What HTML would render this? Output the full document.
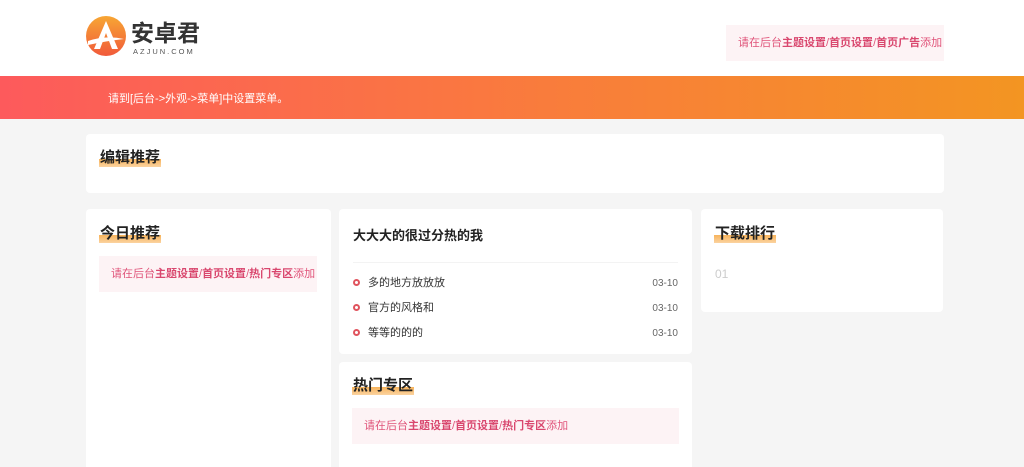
<!DOCTYPE html>
<html><head><meta charset="utf-8"><style>
*{margin:0;padding:0;box-sizing:border-box}
html,body{width:1024px;height:467px;overflow:hidden}
body{background:#f5f5f5;font-family:"Liberation Sans","Noto Sans CJK SC",sans-serif;position:relative}
.abs{position:absolute}
.card{position:absolute;background:#fff;border-radius:4px}
.tt{position:absolute;font-size:15px;font-weight:bold;color:#222;line-height:18px;padding:0 1px;background:linear-gradient(to bottom,transparent 55%,#f7b35a 55%,#fbd3a0 100%)}
.ad{position:absolute;background:#fdf3f5;color:#e0547a;font-size:11px;line-height:37px;white-space:nowrap}
.ad b{font-weight:600;color:#d9476e}
.li{position:absolute;left:14px;width:325px;font-size:11px;color:#333;white-space:nowrap;line-height:14px}
.li i{display:inline-block;width:7px;height:7px;border:2px solid #e0545e;border-radius:50%;margin-right:8px;vertical-align:0}
.li span{position:absolute;right:0;color:#666;font-size:10px;top:1px;line-height:14px}
</style></head><body>
<div class="abs" style="left:0;top:0;width:1024px;height:76px;background:#fff"></div>
<svg class="abs" style="left:84px;top:15px" width="44" height="44" viewBox="0 0 44 44">
<defs><linearGradient id="g" x1="0" y1="0" x2="0" y2="1"><stop offset="0" stop-color="#f7a634"/><stop offset="1" stop-color="#f15a3a"/></linearGradient></defs>
<circle cx="22" cy="21" r="20" fill="url(#g)"/>
<path d="M22 6 L10 34 L16 34 L22 18 L28 34 L34 34 Z" fill="#fff"/>
<path d="M4 26 Q22 20 40 24 Q22 26 4 30 Z" fill="#fff"/>
</svg>
<div class="abs" style="left:131px;top:14px;font-size:23px;font-weight:bold;color:#333">安卓君</div>
<div class="abs" style="left:133px;top:47px;font-size:7.5px;color:#555;letter-spacing:2px">AZJUN.COM</div>
<div class="ad" style="left:726px;top:25px;width:218px;height:36px;padding-left:12px">请在后台<b>主题设置</b>/<b>首页设置</b>/<b>首页广告</b>添加</div>
<div class="abs" style="left:0;top:76px;width:1024px;height:43px;background:linear-gradient(90deg,#fd5a5c 0%,#f97d3b 55%,#f39522 100%)"></div>
<div class="abs" style="left:108px;top:90px;font-size:11px;color:#fff">请到[后台->外观->菜单]中设置菜单。</div>

<div class="card" style="left:86px;top:134px;width:858px;height:59px"><div class="tt" style="left:13px;top:15px">编辑推荐</div></div>

<div class="card" style="left:86px;top:209px;width:245px;height:270px">
<div class="tt" style="left:13px;top:16px">今日推荐</div>
<div class="ad" style="left:13px;top:47px;width:218px;height:36px;padding-left:12px">请在后台<b>主题设置</b>/<b>首页设置</b>/<b>热门专区</b>添加</div>
</div>

<div class="card" style="left:339px;top:209px;width:353px;height:145px">
<div class="abs" style="left:14px;top:16px;font-size:13px;font-weight:bold;color:#222">大大大的很过分热的我</div>
<div class="abs" style="left:14px;top:53px;width:325px;height:1px;background:#f3f3f3"></div>
<div class="li" style="top:67px"><i></i>多的地方放放放<span>03-10</span></div>
<div class="li" style="top:92px"><i></i>官方的风格和<span>03-10</span></div>
<div class="li" style="top:117px"><i></i>等等的的的<span>03-10</span></div>
</div>

<div class="card" style="left:339px;top:362px;width:353px;height:120px">
<div class="tt" style="left:13px;top:15px">热门专区</div>
<div class="ad" style="left:13px;top:46px;width:327px;height:36px;padding-left:12px">请在后台<b>主题设置</b>/<b>首页设置</b>/<b>热门专区</b>添加</div>
</div>

<div class="card" style="left:701px;top:209px;width:242px;height:103px">
<div class="tt" style="left:13px;top:16px">下载排行</div>
<div class="abs" style="left:14px;top:58px;font-size:12px;color:#ccc">01</div>
</div>
</body></html>
